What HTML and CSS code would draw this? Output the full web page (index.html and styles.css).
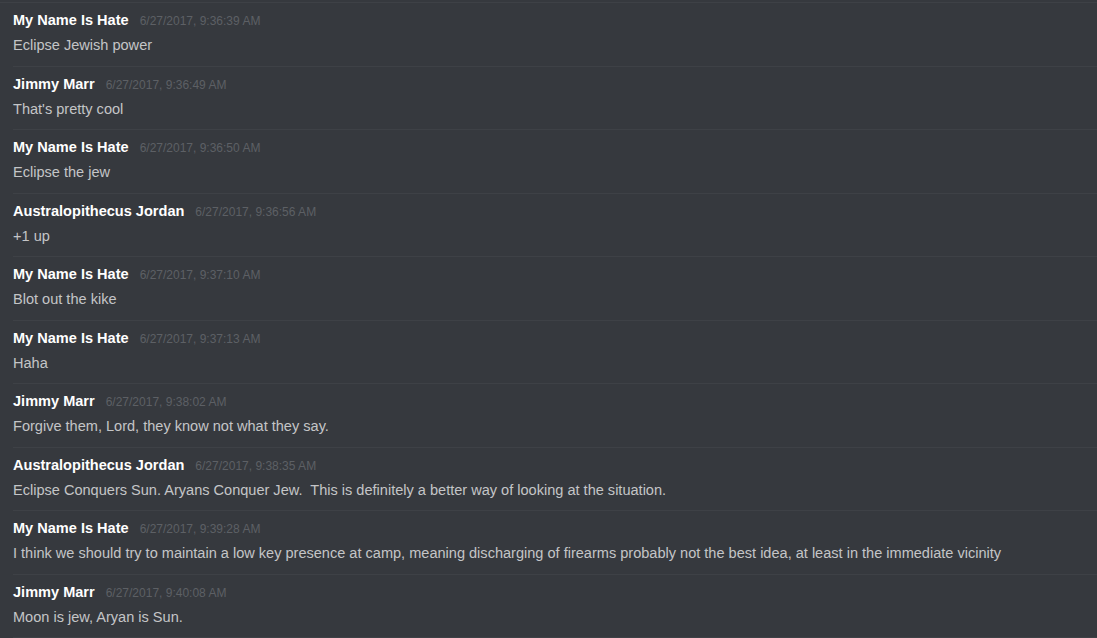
FILE: index.html
```html
<!DOCTYPE html>
<html lang="en">
<head>
<meta charset="utf-8" />
<title>Chat log</title>
<link rel="stylesheet" href="styles.css">
</head>
<body>
	<div class="log">
		<div class="msg">
			<div class="head"><span class="name">My Name Is Hate</span><span class="time">6/27/2017, 9:36:39 AM</span></div>
			<div class="text">Eclipse Jewish power</div>
		</div>
		<div class="msg">
			<div class="head"><span class="name">Jimmy Marr</span><span class="time">6/27/2017, 9:36:49 AM</span></div>
			<div class="text">That's pretty cool</div>
		</div>
		<div class="msg">
			<div class="head"><span class="name">My Name Is Hate</span><span class="time">6/27/2017, 9:36:50 AM</span></div>
			<div class="text">Eclipse the jew</div>
		</div>
		<div class="msg">
			<div class="head"><span class="name">Australopithecus Jordan</span><span class="time">6/27/2017, 9:36:56 AM</span></div>
			<div class="text">+1 up</div>
		</div>
		<div class="msg">
			<div class="head"><span class="name">My Name Is Hate</span><span class="time">6/27/2017, 9:37:10 AM</span></div>
			<div class="text">Blot out the kike</div>
		</div>
		<div class="msg">
			<div class="head"><span class="name">My Name Is Hate</span><span class="time">6/27/2017, 9:37:13 AM</span></div>
			<div class="text">Haha</div>
		</div>
		<div class="msg">
			<div class="head"><span class="name">Jimmy Marr</span><span class="time">6/27/2017, 9:38:02 AM</span></div>
			<div class="text">Forgive them, Lord, they know not what they say.</div>
		</div>
		<div class="msg">
			<div class="head"><span class="name">Australopithecus Jordan</span><span class="time">6/27/2017, 9:38:35 AM</span></div>
			<div class="text">Eclipse Conquers Sun. Aryans Conquer Jew.&nbsp; This is definitely a better way of looking at the situation.</div>
		</div>
		<div class="msg">
			<div class="head"><span class="name">My Name Is Hate</span><span class="time">6/27/2017, 9:39:28 AM</span></div>
			<div class="text">I think we should try to maintain a low key presence at camp, meaning discharging of firearms probably not the best idea, at least in the immediate vicinity</div>
		</div>
		<div class="msg">
			<div class="head"><span class="name">Jimmy Marr</span><span class="time">6/27/2017, 9:40:08 AM</span></div>
			<div class="text">Moon is jew, Aryan is Sun.</div>
		</div>
	</div>
</body>
</html>
```
FILE: styles.css
```css
* {
	margin: 0;
	padding: 0;
}

html, body {
	height: 100%;
	background: #36393e;
	overflow: hidden;
}

body {
	font: 14.55px "Liberation Sans", Arial, sans-serif;
}

.log {
	border-top: 1px solid #3e4146;
	margin-top: 2px;
}

.msg {
	margin-left: 13px;
	border-bottom: 1px solid #3e4146;
	padding: 8px 0 10.5px;
}

.head {
	display: flex;
	align-items: baseline;
	height: 18px;
	line-height: 18px;
}

.name {
	color: #fff;
	font-weight: bold;
}

.time {
	color: #5d6065;
	font-size: 12px;
	margin-left: 11px;
}

.text {
	margin-top: 6px;
	line-height: 20px;
	color: #c4c5c7;
	white-space: nowrap;
}
```
